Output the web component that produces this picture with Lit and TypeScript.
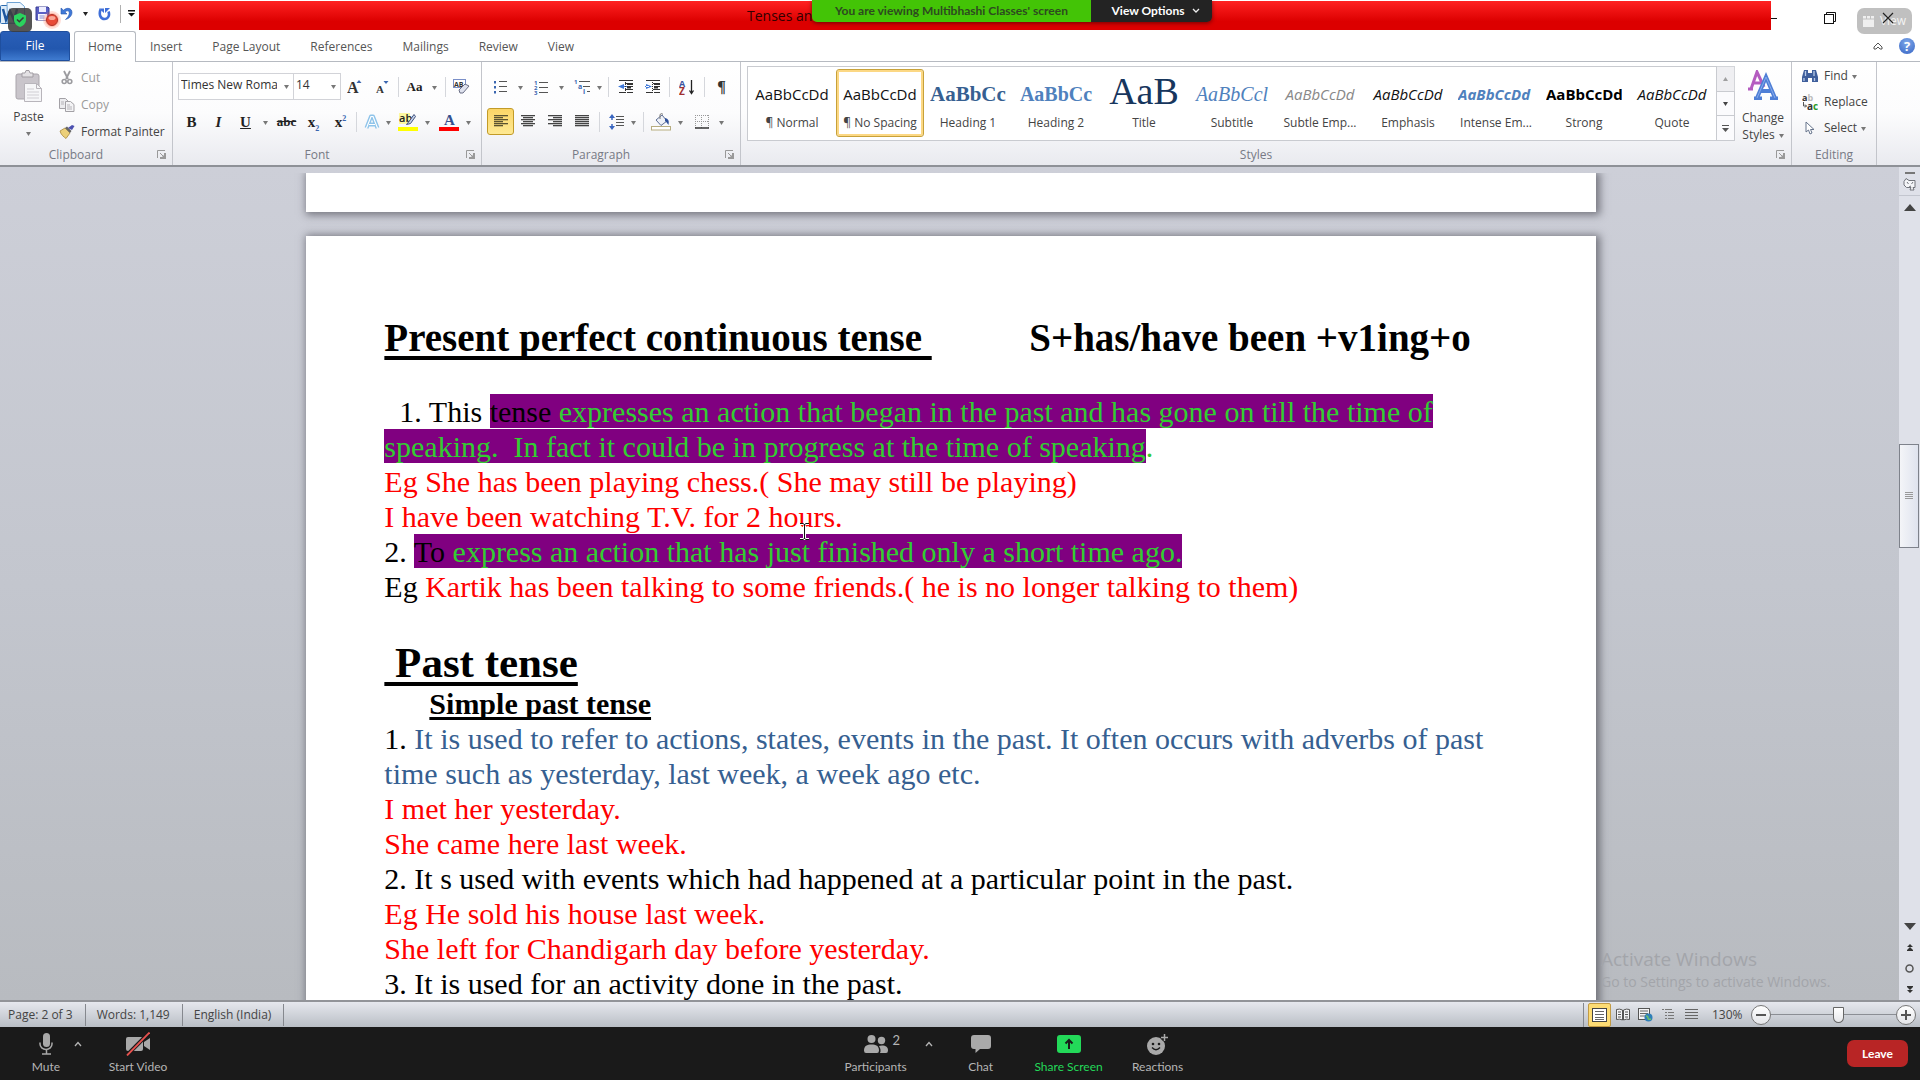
import { LitElement, html, svg, css, nothing, TemplateResult } from "lit";
import { customElement } from "lit/decorators.js";
import { classMap } from "lit/directives/class-map.js";

type Icon = TemplateResult;
const icon = (w: number, h: number, body: unknown): Icon =>
  html`<svg width=${w} height=${h} viewBox="0 0 ${w} ${h}" aria-hidden="true">${body}</svg>`;

const lines = (rows: number[][], color = "#444", t = 2) =>
  rows.map(([x, y, w]) => svg`<rect x=${x} y=${y} width=${w} height=${t} fill=${color} />`);

const caret = html`<svg class="caret" width="5" height="4" viewBox="0 0 5 4" aria-hidden="true"><path d="M0 0h5L2.500 4z" fill="#777" /></svg>`;
const launcherIcon = icon(10, 10, svg`<path d="M.5 8V.5H8" fill="none" stroke="#999" /><path d="M3 3l3 3" stroke="#999" /><path d="M9 3v6H3V7l2 0 2-2V3z" fill="#999" />`);

const I = {
  word: icon(25, 24, svg`<rect x=".5" y="3.500" width="20" height="18" rx="1" fill="#dcebf8" stroke="#2f6db0" /><path d="M7 .5h13l4.500 4v16.500h-17z" fill="#eef6fd" stroke="#6fa3d4" /><path d="M3 7l3 11 4-9 4 9 3-11" fill="none" stroke="#1d559d" stroke-width="2.500" />`),
  save: icon(15, 15, svg`<path d="M1 1h12l1 1v12H1z" fill="#5a5fc4" stroke="#3a3f94" /><rect x="4" y="1" width="7" height="5" fill="#eef" /><rect x="3" y="8" width="9" height="6" fill="#f6f6ff" /><path d="M4.500 10h5M4.500 12h5" stroke="#8a8fd0" />`),
  rec: icon(20, 20, svg`<circle cx="10" cy="10" r="9" fill="#ff6a4a" opacity=".22" /><circle cx="10" cy="10" r="7" fill="#ff6a4a" opacity=".3" /><circle cx="10" cy="10" r="5.500" fill="#e84a37" stroke="#b03328" /><ellipse cx="10" cy="8" rx="3.500" ry="2" fill="#f9a898" />`),
  undo: icon(13, 14, svg`<path d="M1 1v6h6L5 5c3-2.500 5-.5 4 2.500C8.500 9.500 7 11 5.500 12.500 9.500 11.500 12 8.500 12 5.500 12 1 7 0 3.500 3.200z" fill="#3f78d8" stroke="#2858ac" stroke-width=".6" />`),
  redo: icon(13, 14, svg`<path d="M2.500 2.500C.5 8 3 12 6.500 12S12 8.500 10.500 4.500" fill="none" stroke="#3f6fd8" stroke-width="2.600" /><path d="M1 1.500h5v4.500zM12 1H7v5z" fill="#3f6fd8" />`),
  qatMore: icon(7, 7, svg`<path d="M0 0h7v1.500H0zM0 3h7L3.500 6.500z" fill="#111" />`),
  paste: icon(28, 32, svg`<rect x="1" y="4" width="23" height="25" rx="2" fill="#c9c5cb" stroke="#aaa6ac" /><path d="M7 3h3l1-2.500h3L15 3h3v4H7z" fill="#e3e1e4" stroke="#a19da3" /><path d="M9.500 13.500h12l5 5v13h-17z" fill="#f6f6f8" stroke="#b8b5bb" /><path d="M21.500 13.500v5h5" fill="none" stroke="#b8b5bb" /><path d="M12 19h7M12 22h12M12 25h12M12 28h12" stroke="#d0ced3" />`),
  cut: icon(12, 15, svg`<path d="M3 1l4 8M9 1L5 9" stroke="#9b9b9f" stroke-width="1.800" fill="none" /><circle cx="3.200" cy="11.500" r="2" fill="none" stroke="#9b9b9f" stroke-width="1.600" /><circle cx="8.800" cy="11.500" r="2" fill="none" stroke="#9b9b9f" stroke-width="1.600" />`),
  copy: icon(16, 14, svg`<path d="M.5.500h6l3 3v7h-9z" fill="#ececef" stroke="#a3a1a6" /><path d="M6.500 3.500h5l3.500 3v7H6.500z" fill="#f4f4f6" stroke="#a3a1a6" /><path d="M8 7h3M8 9h5M8 11h5M2 4h3M2 6h3" stroke="#b5b3b8" />`),
  painter: icon(16, 14, svg`<path d="M1 6l5-3 5 5-4 5.500C5 12 2 10 1 6z" fill="#ecd07a" stroke="#a8893c" stroke-width=".8" /><path d="M6 3l2-1.500 4.500 4.500L11 8z" fill="#666" /><path d="M9 3l4-3 2.500 1-2.500 4z" fill="#4b4fb0" />`),
  grow: icon(15, 16, svg`<text x="0" y="14" class="ser" font-size="16">A</text><path d="M9.500 4h5L12 1z" fill="#3a66b0" />`),
  shrink: icon(14, 14, svg`<text x="1" y="13" class="ser" font-size="11">A</text><path d="M8.500 1h5L11 4z" fill="#3a66b0" />`),
  clear: icon(18, 16, svg`<rect x=".5" y=".5" width="12" height="8" fill="#fff" stroke="#7a8fc8" /><text x="1" y="7.500" font-size="7" font-weight="700" fill="#333">AB</text><path d="M6 11l6-6 4 2-6 7-3 0z" fill="#dfe2ee" stroke="#6a6f85" />`),
  effects: icon(16, 16, svg`<path d="M2.500 14L7 2.500h2L13.500 14M5 10.500h6" fill="none" stroke="#8fc4ea" stroke-width="4" stroke-linejoin="round" /><path d="M2.500 14L7 2.500h2L13.500 14M5 10.500h6" fill="none" stroke="#fff" stroke-width="1.200" />`),
  highlight: icon(20, 19, svg`<rect y="15" width="20" height="4" fill="#ff0" /><rect x="1" y="1" width="11" height="11" fill="#fdf8a0" /><text x="1" y="10" font-size="11" font-weight="600" fill="#222">ab</text><path d="M16 2.500l-5 7-2.500 3 4-1 5-7z" fill="#c8d3ea" stroke="#40527e" />`),
  fontColor: icon(20, 19, svg`<rect y="15" width="20" height="4" fill="#f00" /><text x="5" y="13" class="serb" font-size="15">A</text>`),
  bullets: icon(15, 14, svg`${[1, 6, 11].map((y) => svg`<rect x="1" y=${y} width="2" height="2.500" fill="#3a66b0" />`)}${lines([[6, 1, 8], [6, 6, 8], [6, 11, 8]], "#555", 1)}`),
  numbers: icon(15, 16, svg`${["1", "2", "3"].map((n, i) => svg`<text x="0" y=${6 + i * 5} font-size="6" font-weight="700" fill="#3a66b0">${n}</text>`)}${lines([[5, 3, 9], [5, 8, 9], [5, 13, 9]], "#555", 1)}`),
  multi: icon(17, 16, svg`<text x="0" y="5" font-size="6" font-weight="700" fill="#3a66b0">1</text><text x="4" y="10" font-size="7" font-weight="700" fill="#3a66b0">a</text><text x="9" y="15" font-size="7" font-weight="700" fill="#3a66b0">i</text>${lines([[5, 2, 11], [9, 7, 7], [13, 12, 3]], "#555", 1)}`),
  outdent: icon(16, 14, svg`<path d="M6 4v5L0 6.500zM5 6h5v1H5z" fill="#3f78d8" />${lines([[1, 0, 14], [7, 3, 8], [9, 6, 6], [7, 9, 8], [1, 12, 6], [9, 12, 6]], "#333", 1)}<path d="M7.500 0v14" stroke="#333" stroke-dasharray="1 1" /><path d="M9 4h6M9 7.500h4" stroke="#333" stroke-width="2" />`),
  indent: icon(16, 14, svg`<path d="M1 4v5l6-2.500zM0 6h4v1H0z" fill="#3f78d8" />${lines([[1, 0, 14], [8, 3, 7], [9, 6, 6], [8, 9, 7], [1, 12, 6], [9, 12, 6]], "#333", 1)}<path d="M7.500 0v14" stroke="#333" stroke-dasharray="1 1" /><path d="M9 4h6M9 7.500h4" stroke="#333" stroke-width="2" />`),
  sort: icon(16, 16, svg`<text x="0" y="7.500" font-size="9" font-weight="700" fill="#3a55a0">A</text><text x="0" y="15.500" font-size="10" font-weight="700" fill="#a03030">Z</text><path d="M12.500 1v13M10.500 11.500l2 3 2-3" fill="none" stroke="#222" stroke-width="1.300" />`),
  alignL: icon(14, 13, lines([[0, 0, 14], [0, 2, 9], [0, 4, 14], [0, 6, 9], [0, 8, 14], [0, 10, 9]], "#5a5230", 1.3)),
  alignC: icon(14, 13, lines([[0, 0, 14], [2, 2, 10], [0, 4, 14], [2, 6, 10], [0, 8, 14], [2, 10, 10]], "#444", 1.3)),
  alignR: icon(14, 13, lines([[0, 0, 14], [5, 2, 9], [0, 4, 14], [5, 6, 9], [0, 8, 14], [5, 10, 9]], "#444", 1.3)),
  justify: icon(14, 13, lines([[0, 0, 14], [0, 2, 14], [0, 4, 14], [0, 6, 14], [0, 8, 14], [0, 10, 14]], "#444", 1.3)),
  spacing: icon(15, 16, svg`<path d="M3 0l3 4H0zM3 16l3-4H0z" fill="#3a66c0" /><path d="M3 3v3M3 10v3" stroke="#3a66c0" stroke-width="1.500" />${lines([[7, 2, 8], [7, 5, 8], [7, 8, 8], [7, 11, 8]], "#555", 1)}`),
  bucket: icon(20, 18, svg`<rect x=".5" y="13.500" width="19" height="3.500" fill="#fff" stroke="#b7ad80" /><path d="M5 7l6-5 5 6-6 4.500z" fill="#eef1f8" stroke="#5e6f95" /><path d="M9 6V1.500q2-2 3 0" fill="none" stroke="#777" /><path d="M14 5q5 1 3.500 7-2-3-3.500-4z" fill="#2d4f9a" />`),
  borders: icon(14, 14, svg`<path d="M.5 0v13M6.500 0v13M13.500 0v13M0 .5h14M0 6.500h14" stroke="#999" stroke-dasharray="1 1" /><path d="M0 13h14" stroke="#333" stroke-width="1.500" />`),
  changeStyles: icon(30, 30, svg`<path d="M0 19h5M3 19L9 2l7 15M5 13h8" fill="none" stroke="#b45cc0" stroke-width="3" /><path d="M6 28.500h8M22 28.500h8M9 28L18 7l9 21M12 21h11" fill="none" stroke="#4f7fd6" stroke-width="4" /><path d="M9 28L18 7l9 21" fill="none" stroke="#86abeb" stroke-width="1" />`),
  find: icon(16, 14, svg`<path d="M2 1h4v3h4V1h4l2 7v5h-6V9H6v4H0V8z" fill="#3f5f9c" /><path d="M3.500 2v5M12 2v5M2 9v3M12.500 9v3" stroke="#b8cbe8" stroke-width="1.300" />`),
  replace: icon(16, 16, svg`<text x="0" y="7" font-size="9" font-weight="700" fill="#333">a<tspan fill="#bbb">b</tspan></text><text x="5" y="15.500" font-size="10" font-weight="700" fill="#333">a<tspan fill="#2a9a2a">c</tspan></text><path d="M1.500 8v4h3M3 10.500l1.500 1.500L3 13.500" fill="none" stroke="#555" />`),
  select: icon(10, 14, svg`<path d="M1 1v10l2.500-2 1.500 4 2-1-1.500-3.500H9z" fill="#fff" stroke="#66748c" />`),
  shield: icon(14, 16, svg`<path d="M7 1l6 2.500v4c0 4-3 6.500-6 7.500-3-1-6-3.500-6-7.500v-4z" fill="#2bd35e" /><path d="M4 7.500l2.300 2.300L10.500 5.500" fill="none" stroke="#3a3a3a" stroke-width="1.500" />`),
  chevDown: icon(8, 6, svg`<path d="M1 1l3 3 3-3" fill="none" stroke="#eee" stroke-width="1.300" />`),
  chevUp: icon(8, 6, svg`<path d="M1 5l3-3.500L7 5" fill="none" stroke="#b5b5b5" stroke-width="1.300" />`),
  min: icon(6, 12, svg`<path d="M0 6.500h6" stroke="#111" />`),
  restore: icon(12, 12, svg`<rect x=".5" y="2.500" width="9" height="9" fill="none" stroke="#111" /><path d="M2.500 2V.5h9v9H10" fill="none" stroke="#111" />`),
  close: icon(12, 12, svg`<path d="M1 1l10 10M11 1L1 11" stroke="#222" stroke-width="1.200" />`),
  grid: icon(11, 11, svg`<path d="M0 0h3v2.500H0zM4 0h3v2.500H4zM8 0h3v2.500H8zM0 3.500h11V11H0z" fill="#efefef" />`),
  collapse: icon(10, 8, svg`<path d="M1 5l4-4 4 4v2H7L5 5 3 7H1z" fill="#fff" stroke="#555" />`),
  ruler: icon(13, 13, svg`<path d="M1 3.500l2-3 3 2h6v7h-2l1 2.500H7l1-2.500H3.500L1 7z" fill="#f4f5f8" stroke="#72757c" /><path d="M4 4l1.500 2M10 4L8.500 6M6 9l2-1" stroke="#72757c" fill="none" />`),
  mic: icon(14, 22, svg`<rect x="4" y="0" width="7" height="14" rx="3.500" fill="#a9a9a9" /><path d="M1 9.500v1.500a6 5.500 0 0 0 12 0V9.500" fill="none" stroke="#a9a9a9" stroke-width="1.500" /><path d="M7.500 17v4M3 21h9" stroke="#a9a9a9" stroke-width="1.500" />`),
  video: icon(24, 24, svg`<rect x="0" y="5" width="17" height="14" rx="2" fill="#a9a9a9" /><path d="M18 10l6-4v12l-6-4z" fill="#a9a9a9" /><path d="M0 24L24 0" stroke="#1a1a1a" stroke-width="4" /><path d="M1 23.500L23.500.5" stroke="#e8524f" stroke-width="1.800" />`),
  people: icon(24, 18, svg`<circle cx="7.500" cy="4" r="4" fill="#a9a9a9" /><path d="M0 15.500C0 11 3 9.500 7.500 9.500S15 11 15 15.500q0 2.500-2 2.500H2Q0 18 0 15.500z" fill="#a9a9a9" /><circle cx="17.500" cy="5.500" r="3.700" fill="#a9a9a9" /><path d="M15 11q1-.5 3-.5c4 0 6 1.500 6 5q0 2.500-2 2.500h-6q1.500-3-1-7z" fill="#a9a9a9" />`),
  chat: icon(20, 18, svg`<path d="M3 0h14q3 0 3 3v8q0 3-3 3H9l-4.500 4V14H3q-3 0-3-3V3q0-3 3-3z" fill="#a9a9a9" />`),
  share: icon(24, 18, svg`<rect width="24" height="18" rx="3" fill="#23d959" /><path d="M12 14V5M8.500 8.500L12 5l3.500 3.500" fill="none" stroke="#1a1a1a" stroke-width="2" />`),
  react: icon(21, 21, svg`<circle cx="9" cy="12" r="9" fill="#a9a9a9" /><circle cx="6" cy="10" r="1.300" fill="#1a1a1a" /><circle cx="12" cy="10" r="1.300" fill="#1a1a1a" /><path d="M5 13.500q4 4.500 8 0" fill="none" stroke="#1a1a1a" stroke-width="1.400" /><path d="M17.500 0v7M14 3.500h7" stroke="#1a1a1a" stroke-width="4" /><path d="M17.500 0v7M14 3.500h7" stroke="#a9a9a9" stroke-width="1.500" />`),
};

const views: [string, Icon][] = [
  ["Print Layout", icon(15, 14, svg`<rect x=".5" y=".5" width="14" height="13" fill="#fff" stroke="#444" />${lines([[3, 3, 9], [3, 6, 9], [3, 9, 9], [3, 11, 9]], "#666", 1)}`)],
  ["Full Screen Reading", icon(14, 14, svg`<path d="M.5 1.500q3-1 6 .5v10q-3-1.500-6-.5zM13.500 1.500q-3-1-6 .5v10q3-1.500 6-.5z" fill="#f4f4f6" stroke="#555" /><path d="M2 4h3M2 6.500h3M2 9h3M9 4h3M9 6.500h3M9 9h3" stroke="#555" />`)],
  ["Web Layout", icon(15, 14, svg`<rect x=".5" y=".5" width="11" height="11" fill="#f4f4f6" stroke="#555" /><path d="M2 3h8M2 5.500h8M2 8h5" stroke="#666" /><circle cx="10.500" cy="9.500" r="4" fill="#2f7fb8" /><path d="M8 8q2 0 2 2t3 1" stroke="#6cc06c" fill="none" stroke-width="1.500" />`)],
  ["Outline", icon(13, 13, svg`${lines([[0, 1, 2], [3, 1, 7], [3, 4, 2], [6, 4, 6], [3, 7, 2], [6, 7, 6], [3, 10, 2], [6, 10, 6]], "#777", 1)}`)],
  ["Draft", icon(13, 13, lines([[0, 1, 13], [0, 4, 13], [0, 7, 13], [0, 10, 13]], "#666", 1))],
];

const styleItems = [
  ["AaBbCcDd", "¶ Normal", "s-normal"],
  ["AaBbCcDd", "¶ No Spacing", "s-normal"],
  ["AaBbCc", "Heading 1", "s-h1"],
  ["AaBbCc", "Heading 2", "s-h2"],
  ["AaB", "Title", "s-title"],
  ["AaBbCcl", "Subtitle", "s-sub"],
  ["AaBbCcDd", "Subtle Emp...", "s-subtle"],
  ["AaBbCcDd", "Emphasis", "s-emph"],
  ["AaBbCcDd", "Intense Em...", "s-intense"],
  ["AaBbCcDd", "Strong", "s-strong"],
  ["AaBbCcDd", "Quote", "s-emph"],
];

@customElement("word-ribbon")
export class WordRibbon extends LitElement {
  static styles = css`
    :host { display: block; color: #444; font: 12px/16px "Open Sans", "Noto Sans", sans-serif; }
    * { box-sizing: border-box; }
    svg { display: block; flex: none; }
    .ser { font-family: "Liberation Serif", serif; font-weight: 700; fill: #333; }
    .serb { font-family: "Liberation Serif", serif; font-weight: 700; fill: #34508f; }
    button { font: inherit; color: inherit; background: none; border: 0; padding: 0; margin: 0; }
    .tabs { display: flex; height: 31px; background: #fff; border-bottom: 1px solid #b6bac1; align-items: flex-end; }
    .tab { height: 30px; padding: 0 13px; margin-right: 2px; font-size: 12px; border: 1px solid transparent; border-bottom: 0; color: #555; }
    .file { width: 70px; margin-right: 4px; color: #fff; border: 1px solid #1f4f9e; border-radius: 3px 3px 0 0; background: linear-gradient(#2a5fb8, #2257ae 60%, #3f7bd0); }
    .home { height: 31px; margin: 0 0 -1px; border-color: #b6bac1; border-radius: 3px 3px 0 0; background: #fff; padding-bottom: 1px; }
    .push { margin-left: auto; display: flex; gap: 16px; align-items: center; height: 30px; padding-right: 5px; }
    .help { width: 16px; height: 16px; border-radius: 50%; background: radial-gradient(circle at 50% 30%, #7ea8ea, #3765c4); color: #fff; font: 700 13px/16px "Open Sans", sans-serif; }
    .ribbon { display: flex; height: 105px; padding-right: 43px; background: linear-gradient(#fff, #fcfcfd 50%, #e9eaef); border-bottom: 2px solid #8e9197; }
    .group { display: flex; flex-direction: column; border-right: 1px solid #c3c5cb; min-width: 0; }
    .clipboard { width: 173px; }
    .font { width: 309px; }
    .para { width: 259px; }
    .styles { flex: 1; }
    .editing { width: 85px; }
    .body { flex: 1; min-height: 0; }
    .foot { display: flex; align-items: center; height: 20px; color: #777a85; padding: 0 5px; }
    .foot span { flex: 1; text-align: center; }
    .foot button { margin-left: 10px; }
    .clip { display: flex; padding-top: 2px; }
    .paste { display: flex; flex-direction: column; align-items: center; width: 57px; padding-top: 6px; gap: 7px; }
    .stack { display: flex; flex-direction: column; }
    .stack button { display: flex; flex: none; align-items: center; height: 27px; gap: 6px; padding-left: 2px; }
    .stack .ico { width: 16px; display: flex; justify-content: center; }
    .dim { color: #9a9a9a !important; }
    .rows { display: flex; flex-direction: column; gap: 8px; padding: 11px 5px 0; }
    .row { display: flex; height: 27px; align-items: center; }
    .ib { display: flex; align-items: center; height: 27px; border: 1px solid transparent; border-radius: 3px; }
    .ib .g { width: 25px; display: flex; justify-content: center; align-items: center; }
    .ib.drop .g { width: 27px; margin-left: -1px; }
    .ib .caret { margin: 2px 4px 0 4px; }
    .ib.tight .caret { margin: 2px 2px 0 1px; }
    .on { border-color: #c29b28; background: linear-gradient(#fbd567, #fee993); }
    .sep { width: 8px; height: 20px; background: linear-gradient(#d5d7dc, #d5d7dc) center / 1px 100% no-repeat; }
    .sep.slim { width: 6px; }
    .sep.wide { width: 12px; }
    .glyph { font: 700 15px/20px "Liberation Serif", serif; color: #222; }
    .it { font-style: italic; }
    .un { text-decoration: underline; }
    .strike { text-decoration: line-through; font-size: 13px; }
    .case { font-size: 13px; }
    .glyph sub, .glyph sup { font-size: 8px; color: #3a66b0; line-height: 0; }
    .pil { font: 700 16px/20px "Liberation Serif", serif; color: #333; }
    .combo { position: relative; display: flex; height: 27px; border: 1px solid #d2d3d8; background: #fff; }
    .combo select { appearance: none; border: 0; background: none; padding: 0 0 3px 2px; margin: 0 16px 0 0; width: 98px; font: 12px/20px "Open Sans", sans-serif; color: #333; overflow: hidden; text-overflow: clip; }
    .combo .caret { position: absolute; right: 4px; top: 11px; }
    .combo.size { margin-left: -1px; }
    .combo.size select { width: 30px; }
    .stylebody { display: flex; padding: 4px 0 0 6px; }
    .gallery { display: flex; flex: 1; height: 75px; border: 1px solid #c9cbd0; background: #fff; }
    .item { flex: 1 1 0; min-width: 0; display: flex; flex-direction: column; align-items: center; padding: 3px 5px 0; margin: 2px 0 3px; border: 1px solid transparent; border-radius: 3px; }
    .item.sel { border-color: #c7a13a; box-shadow: inset 0 0 0 2px #fcd884; background: #fff; }
    .sample { width: 100%; height: 42px; overflow: hidden; white-space: nowrap; font-size: 15px; line-height: 42px; color: #111; text-align: center; }
    .item .name { white-space: nowrap; color: #444; }
    .s-h1 { font: 700 21px/42px "Liberation Serif", serif; color: #365f91; text-align: left; }
    .s-h2 { font: 700 20px/42px "Liberation Serif", serif; color: #4f81bd; }
    .s-title { font: 38px/36px "Liberation Serif", serif; color: #17365d; }
    .s-sub { font: italic 20px/42px "Liberation Serif", serif; color: #4f81bd; }
    .s-subtle { font-style: italic; color: #888; }
    .s-emph { font-style: italic; }
    .s-intense { font-style: italic; font-weight: 700; color: #4f81bd; text-align: left; }
    .s-strong { font-weight: 700; color: #000; text-align: left; }
    .nav { display: flex; flex-direction: column; width: 18px; height: 75px; }
    .nav button { flex: 1; display: flex; align-items: center; justify-content: center; border: 1px solid #c9cbd0; border-left: 0; margin-top: -1px; background: #fbfbfd; }
    .nav button:first-child { margin-top: 0; background: #ececf0; opacity: .8; }
    .change { width: 56px; display: flex; flex-direction: column; align-items: center; padding-top: 4px; gap: 9px; line-height: 17px; }
    .change .caret, .edit .caret { display: inline-block; vertical-align: middle; margin-left: 4px; }
    .edit { padding: 1px 0 0 8px; }
    .edit button { height: 26px; }
  `;

  private ib(label: string, glyph: unknown, o: { drop?: boolean; tight?: boolean; on?: boolean } = {}) {
    return html`<button class=${classMap({ ib: true, drop: !!o.drop, tight: !!o.tight, on: !!o.on })} aria-label=${label}><span class="g">${glyph}</span>${o.drop ? caret : nothing}</button>`;
  }

  private foot(name: string, launcher = true) {
    return html`<div class="foot"><span>${name}</span>${launcher ? html`<button aria-label="${name} settings">${launcherIcon}</button>` : nothing}</div>`;
  }

  render() {
    const ib = this.ib;
    const sep = html`<span class="sep"></span>`;
    const slim = html`<span class="sep slim"></span>`;
    return html`
      <nav class="tabs">
        <button class="tab file">File</button>
        <button class="tab home">Home</button>
        ${["Insert", "Page Layout", "References", "Mailings", "Review", "View"].map((t) => html`<button class="tab">${t}</button>`)}
        <div class="push"><button aria-label="Minimize the Ribbon">${I.collapse}</button><button class="help" aria-label="Help">?</button></div>
      </nav>
      <div class="ribbon">
        <section class="group clipboard">
          <div class="body clip">
            <button class="paste">${I.paste}<span>Paste</span>${caret}</button>
            <div class="stack">
              <button class="dim"><span class="ico">${I.cut}</span>Cut</button>
              <button class="dim"><span class="ico">${I.copy}</span>Copy</button>
              <button><span class="ico">${I.painter}</span>Format Painter</button>
            </div>
          </div>
          ${this.foot("Clipboard")}
        </section>
        <section class="group font">
          <div class="body rows">
            <div class="row">
              <label class="combo"><select aria-label="Font"><option>Times New Roman</option></select>${caret}</label>
              <label class="combo size"><select aria-label="Font size"><option>14</option></select>${caret}</label>
              ${ib("Grow Font", I.grow)}${ib("Shrink Font", I.shrink)}${slim}
              ${ib("Change Case", html`<span class="glyph case">Aa</span>`, { drop: true })}${slim}
              ${ib("Clear Formatting", I.clear)}
            </div>
            <div class="row">
              ${ib("Bold", html`<span class="glyph">B</span>`)}
              ${ib("Italic", html`<span class="glyph it">I</span>`)}
              ${ib("Underline", html`<span class="glyph un">U</span>`, { drop: true })}
              ${ib("Strikethrough", html`<span class="glyph strike">abc</span>`)}
              ${ib("Subscript", html`<span class="glyph">x<sub>2</sub></span>`)}
              ${ib("Superscript", html`<span class="glyph">x<sup>2</sup></span>`)}
              <span class="sep wide"></span>
              ${ib("Text Effects", I.effects, { drop: true, tight: true })}
              ${ib("Text Highlight Color", I.highlight, { drop: true })}
              ${ib("Font Color", I.fontColor, { drop: true })}
            </div>
          </div>
          ${this.foot("Font")}
        </section>
        <section class="group para">
          <div class="body rows">
            <div class="row">
              ${ib("Bullets", I.bullets, { drop: true })}${ib("Numbering", I.numbers, { drop: true })}
              ${ib("Multilevel List", I.multi, { drop: true, tight: true })}${sep}
              ${ib("Decrease Indent", I.outdent)}${ib("Increase Indent", I.indent)}${sep}
              ${ib("Sort", I.sort)}${sep}${ib("Show/Hide", html`<span class="pil">¶</span>`)}
            </div>
            <div class="row">
              ${ib("Align Left", I.alignL, { on: true })}${ib("Center", I.alignC)}${ib("Align Right", I.alignR)}${ib("Justify", I.justify)}${sep}
              ${ib("Line Spacing", I.spacing, { drop: true, tight: true })}${sep}
              ${ib("Shading", I.bucket, { drop: true })}${ib("Borders", I.borders, { drop: true })}
            </div>
          </div>
          ${this.foot("Paragraph")}
        </section>
        <section class="group styles">
          <div class="body stylebody">
            <div class="gallery">
              ${styleItems.map(([s, n, c], i) => html`<button class=${classMap({ item: true, sel: i === 1 })}><span class="sample ${c}">${s}</span><span class="name">${n}</span></button>`)}
            </div>
            <div class="nav">
              <button aria-label="Row up">${icon(5, 4, svg`<path d="M0 4h5L2.500 0z" fill="#888" />`)}</button>
              <button aria-label="Row down">${icon(5, 4, svg`<path d="M0 0h5L2.500 4z" fill="#444" />`)}</button>
              <button aria-label="More">${icon(7, 7, svg`<path d="M0 0h7v1H0zM0 3h7L3.500 7z" fill="#555" />`)}</button>
            </div>
            <button class="change">${I.changeStyles}<span>Change<br />Styles${caret}</span></button>
          </div>
          ${this.foot("Styles")}
        </section>
        <section class="group editing">
          <div class="body stack edit">
            <button><span class="ico">${I.find}</span><span>Find${caret}</span></button>
            <button><span class="ico">${I.replace}</span>Replace</button>
            <button><span class="ico">${I.select}</span><span>Select${caret}</span></button>
          </div>
          ${this.foot("Editing", false)}
        </section>
      </div>`;
  }
}

@customElement("word-document")
export class WordDocument extends LitElement {
  static styles = css`
    :host { display: flex; min-height: 0; overflow: hidden; background: linear-gradient(#cdcfd8, #c3c6ce 50%, #b8bbc0); }
    * { box-sizing: border-box; }
    .canvas { flex: 1; min-width: 0; padding: 6px 0 0 3px; display: flex; overflow: hidden; }
    .scroller { position: relative; flex: 1; overflow: hidden; display: flex; flex-direction: column; align-items: center; gap: 24px; }
    .page { width: 68%; background: #fff; box-shadow: 2px 1px 8px 2px rgba(70, 70, 80, .65); }
    .prev { flex: none; height: 39px; }
    .current { flex: none; min-height: 1200px; padding: 79px 78px 0; font: 30px/35px "Liberation Serif", "Times New Roman", serif; color: #000; }
    p, h1, h2, h3 { margin: 0; font: inherit; }
    h1 { font-size: 39px; line-height: 45px; font-weight: 700; margin-bottom: 34px; white-space: pre; }
    h2 { font-size: 43px; line-height: 47px; font-weight: 700; margin-top: 35px; }
    h3 { font-weight: 700; padding-left: 45px; }
    u { text-decoration: underline 4px; text-underline-offset: 5px; text-decoration-skip-ink: none; }
    h3 u { text-decoration-thickness: 3px; text-underline-offset: 3px; }
    mark { background: #800080; color: #000; padding: 1px 0 0; }
    .green { color: #32cd32; }
    .red { color: #f00; }
    .blue { color: #365f91; }
    .beam { position: absolute; left: 797px; top: 350px; }
    .bar { width: 21px; background: #dfe1e9; display: flex; flex-direction: column; align-items: center; padding-top: 5px; }
    .bar button { border: 0; padding: 0; background: none; width: 21px; display: flex; justify-content: center; align-items: center; }
    .split { width: 10px; height: 2px; background: #777; }
    .rule { height: 22px; border-bottom: 1px solid #c3c6cf !important; }
    .arrow { height: 22px; }
    .track { flex: 1; align-self: stretch; padding-top: 226px; }
    .thumb { display: flex; align-items: center; justify-content: center; width: 20px; height: 104px; border: 1px solid #7e828b; background: linear-gradient(90deg, #f4f5f8, #dfe3ee); }
    .jump { height: 21px; }
    .sect { border-top: 1px solid #b9bcc5; }
  `;

  render() {
    const dbl = (d: string) => html`<svg width="8" height="8" viewBox="0 0 8 8"><path d=${d} fill="#333" /></svg>`;
    return html`
      <div class="canvas">
        <div class="scroller">
          <div class="page prev"></div>
          <article class="page current">
            <h1><u>Present perfect continuous tense </u>${" ".repeat(10)}S+has/have been +v1ing+o</h1>
            <p>&nbsp; 1. This <mark>tense <span class="green">expresses an action that began in the past and has gone on till the time of speaking.&nbsp; In fact it could be in progress at the time of speaking</span></mark><span class="green">.</span></p>
            <p class="red">Eg She has been playing chess.( She may still be playing)</p>
            <p class="red">I have been watching T.V. for 2 hours.</p>
            <p>2. <mark>To <span class="green">express an action that has just finished only a short time ago.</span></mark></p>
            <p>Eg <span class="red">Kartik has been talking to some friends.( he is no longer talking to them)</span></p>
            <h2><u>&nbsp;Past tense</u></h2>
            <h3><u>Simple past tense</u></h3>
            <p>1. <span class="blue">It is used to refer to actions, states, events in the past. It often occurs with adverbs of past time such as yesterday, last week, a week ago etc.</span></p>
            <p class="red">I met her yesterday.</p>
            <p class="red">She came here last week.</p>
            <p>2. It s used with events which had happened at a particular point in the past.</p>
            <p class="red">Eg He sold his house last week.</p>
            <p class="red">She left for Chandigarh day before yesterday.</p>
            <p>3. It is used for an activity done in the past.</p>
          </article>
          <svg class="beam" width="9" height="17" viewBox="0 0 9 17" aria-hidden="true"><path d="M0 .5h3l1.500 1L6 .5h3M4.500 1v15M0 16.500h3l1.500-1 1.500 1h3" fill="none" stroke="#fff" stroke-width="3" /><path d="M0 .5h3l1.500 1L6 .5h3M4.500 1v15M0 16.500h3l1.500-1 1.500 1h3" fill="none" stroke="#111" /></svg>
        </div>
      </div>
      <div class="bar">
        <span class="split"></span>
        <button class="rule" aria-label="View Ruler">${I.ruler}</button>
        <button class="arrow" aria-label="Scroll up">${icon(12, 7, svg`<path d="M0 7h12L6 0z" fill="#444" />`)}</button>
        <div class="track"><div class="thumb">${icon(8, 8, svg`<path d="M0 .5h8M0 2.500h8M0 4.500h8M0 6.500h8" stroke="#999" />`)}</div></div>
        <button class="arrow" aria-label="Scroll down">${icon(12, 7, svg`<path d="M0 0h12L6 7z" fill="#444" />`)}</button>
        <button class="jump sect" aria-label="Previous Page">${dbl("M4 0l3 3H1zM4 3l3 3H1zM1 6h6v1H1z")}</button>
        <button class="jump" aria-label="Select Browse Object">${icon(9, 9, svg`<circle cx="4.500" cy="4.500" r="3.500" fill="none" stroke="#555" stroke-width="1.500" />`)}</button>
        <button class="jump" aria-label="Next Page">${dbl("M4 7l3-3H1zM4 4l3-3H1zM1 0h6v1H1z")}</button>
      </div>`;
  }
}

@customElement("app-root")
export class AppRoot extends LitElement {
  static styles = css`
    :host { display: flex; flex-direction: column; height: 100vh; position: relative; overflow: hidden; background: #fff; font: 12px/16px "Open Sans", "Noto Sans", sans-serif; color: #444; }
    * { box-sizing: border-box; }
    svg { display: block; flex: none; }
    button { font: inherit; color: inherit; background: none; border: 0; padding: 0; margin: 0; }
    .title { display: flex; height: 31px; flex: none; }
    .qat { width: 139px; flex: none; display: flex; align-items: center; padding-bottom: 4px; }
    .qat button { display: flex; }
    .qat .gap { margin-left: 10px; }
    .vline { width: 1px; height: 18px; background: #b0b0b0; margin: 0 7px 0 9px; }
    .red { flex: 1; margin: 1px 0; background: linear-gradient(#ff2222, #dc0000 70%); color: #300; font-size: 14px; line-height: 30px; padding-left: 608px; overflow: hidden; white-space: nowrap; }
    .win { position: relative; z-index: 3; width: 149px; display: flex; align-items: center; padding: 5px 26px 0 0; justify-content: space-between; }
    .banner { position: absolute; top: 0; left: 812px; display: flex; height: 22px; border-radius: 0 0 5px 5px; overflow: hidden; box-shadow: 0 1px 4px rgba(0, 0, 0, .5); font: 700 12px/22px Lato, "Open Sans", sans-serif; z-index: 2; }
    .viewing { width: 279px; text-align: center; background: #43c406; color: #2d4a20; white-space: nowrap; }
    .options { width: 121px; background: #232323; color: #fff; display: flex; align-items: center; justify-content: center; gap: 7px; padding-left: 8px; }
    .shield { position: absolute; left: 8px; top: 8px; width: 24px; height: 24px; border-radius: 5px; background: rgba(62, 62, 62, .88); display: grid; place-items: center; z-index: 2; }
    .rec { position: absolute; left: 42px; top: 10px; }
    .view { position: absolute; right: 8px; top: 8px; width: 55px; height: 26px; border-radius: 7px; background: rgba(150, 150, 150, .6); color: #f4f4f4; display: flex; align-items: center; justify-content: center; gap: 6px; font-size: 12px; z-index: 2; }
    word-ribbon { flex: none; }
    word-document { flex: 1; }
    .status { flex: none; height: 27px; border-top: 2px solid #929499; background: linear-gradient(#e6e8ee, #b9bec5); display: flex; align-items: center; color: #444; }
    .cell { height: 22px; line-height: 22px; padding: 0 12px 0 11px; border-right: 1px solid #85888e; white-space: nowrap; }
    .cell:first-child { padding-left: 8px; }
    .zoom { margin-left: auto; display: flex; align-items: center; padding-right: 4px; }
    .views { display: flex; border-left: 1px solid #85888e; padding-left: 4px; margin-right: 9px; }
    .views button { width: 23px; height: 24px; display: flex; align-items: center; justify-content: center; }
    .views .on { border: 1px solid #c29b45; background: #fddc74; border-radius: 2px; }
    .round { width: 20px !important; height: 20px; border-radius: 50%; border: 1px solid #777 !important; background: linear-gradient(#fff, #e3e4e8) !important; display: grid; place-items: center; }
    .pct { width: 39px; }
    input { appearance: none; width: 125px; height: 20px; margin: 0; background: linear-gradient(#8b8e94, #8b8e94) center / 100% 1px no-repeat; }
    input::-webkit-slider-thumb { appearance: none; width: 11px; height: 16px; background: linear-gradient(#fff, #e6e7ea); border: 1px solid #666; border-radius: 1px 1px 6px 6px; }
    .meet { flex: none; height: 53px; background: #1a1a1a; display: flex; align-items: stretch; color: #b5b5b5; font: 12px/16px Lato, "Open Sans", sans-serif; }
    .left { width: 43%; margin-right: 10px; padding-left: 22px; display: flex; }
    .tool { display: flex; flex-direction: column; align-items: center; width: 80px; padding-top: 5px; }
    .pic { height: 24px; display: flex; align-items: center; position: relative; margin-bottom: 3px; }
    .count { position: absolute; left: 100%; top: 0; margin-left: 5px; font-size: 13px; }
    .mute { width: 48px; }
    .start { width: 88px; margin-left: 8px; }
    .chat { width: 78px; }
    .share { width: 98px; color: #23d959; }
    .up { width: 26px; padding: 14px 0 0 9px; display: flex; }
    .upm { width: 16px; padding: 14px 0 0 4px; display: flex; }
    .leave { margin: 13px 12px 13px auto; width: 61px; height: 27px; border-radius: 7px; background: #b82525; color: #fff; font-weight: 700; }
    .activate { position: absolute; right: 86px; bottom: 88px; width: 233px; color: #a3a5aa; font-size: 14px; line-height: 20px; white-space: nowrap; }
    .activate strong { display: block; font-size: 19px; line-height: 26px; font-weight: 400; }
  `;

  render() {
    return html`
      <header class="title">
        <div class="qat">
          ${I.word}
          <button class="gap" aria-label="Save">${I.save}</button>
          <button class="gap" aria-label="Undo">${I.undo}</button>
          <button class="gap" aria-label="Undo list">${icon(5, 4, svg`<path d="M0 0h5L2.500 4z" fill="#222" />`)}</button>
          <button class="gap" aria-label="Repeat">${I.redo}</button>
          <span class="vline"></span>
          <button aria-label="Customize Quick Access Toolbar">${I.qatMore}</button>
        </div>
        <div class="red">Tenses an</div>
        <div class="win"><button aria-label="Minimize">${I.min}</button><button aria-label="Restore">${I.restore}</button><button aria-label="Close">${I.close}</button></div>
      </header>
      <word-ribbon></word-ribbon>
      <word-document></word-document>
      <footer class="status">
        <span class="cell">Page: 2 of 3</span><span class="cell">Words: 1,149</span><span class="cell">English (India)</span>
        <div class="zoom">
          <div class="views">${views.map(([n, g], i) => html`<button class=${i === 0 ? "on" : ""} aria-label=${n}>${g}</button>`)}</div>
          <span class="pct">130%</span>
          <button class="round" aria-label="Zoom out">${icon(10, 10, svg`<path d="M0 5h10" stroke="#555" stroke-width="2" />`)}</button>
          <input type="range" min="0" max="100" value="54" aria-label="Zoom" />
          <button class="round" aria-label="Zoom in">${icon(10, 10, svg`<path d="M0 5h10M5 0v10" stroke="#555" stroke-width="2" />`)}</button>
        </div>
      </footer>
      <div class="meet">
        <div class="left">
          <button class="tool mute"><span class="pic">${I.mic}</span>Mute</button>
          <button class="upm" aria-label="Audio options">${I.chevUp}</button>
          <button class="tool start"><span class="pic">${I.video}</span>Start Video</button>
        </div>
        <button class="tool"><span class="pic">${I.people}<span class="count">2</span></span>Participants</button>
        <button class="up" aria-label="Participant options">${I.chevUp}</button>
        <button class="tool chat"><span class="pic">${I.chat}</span>Chat</button>
        <button class="tool share"><span class="pic">${I.share}</span>Share Screen</button>
        <button class="tool"><span class="pic">${I.react}</span>Reactions</button>
        <button class="leave">Leave</button>
      </div>
      <div class="banner"><span class="viewing">You are viewing Multibhashi Classes' screen</span><button class="options">View Options ${I.chevDown}</button></div>
      <span class="shield">${I.shield}</span>
      <span class="rec">${I.rec}</span>
      <button class="view">${I.grid}View</button>
      <div class="activate"><strong>Activate Windows</strong>Go to Settings to activate Windows.</div>`;
  }
}
